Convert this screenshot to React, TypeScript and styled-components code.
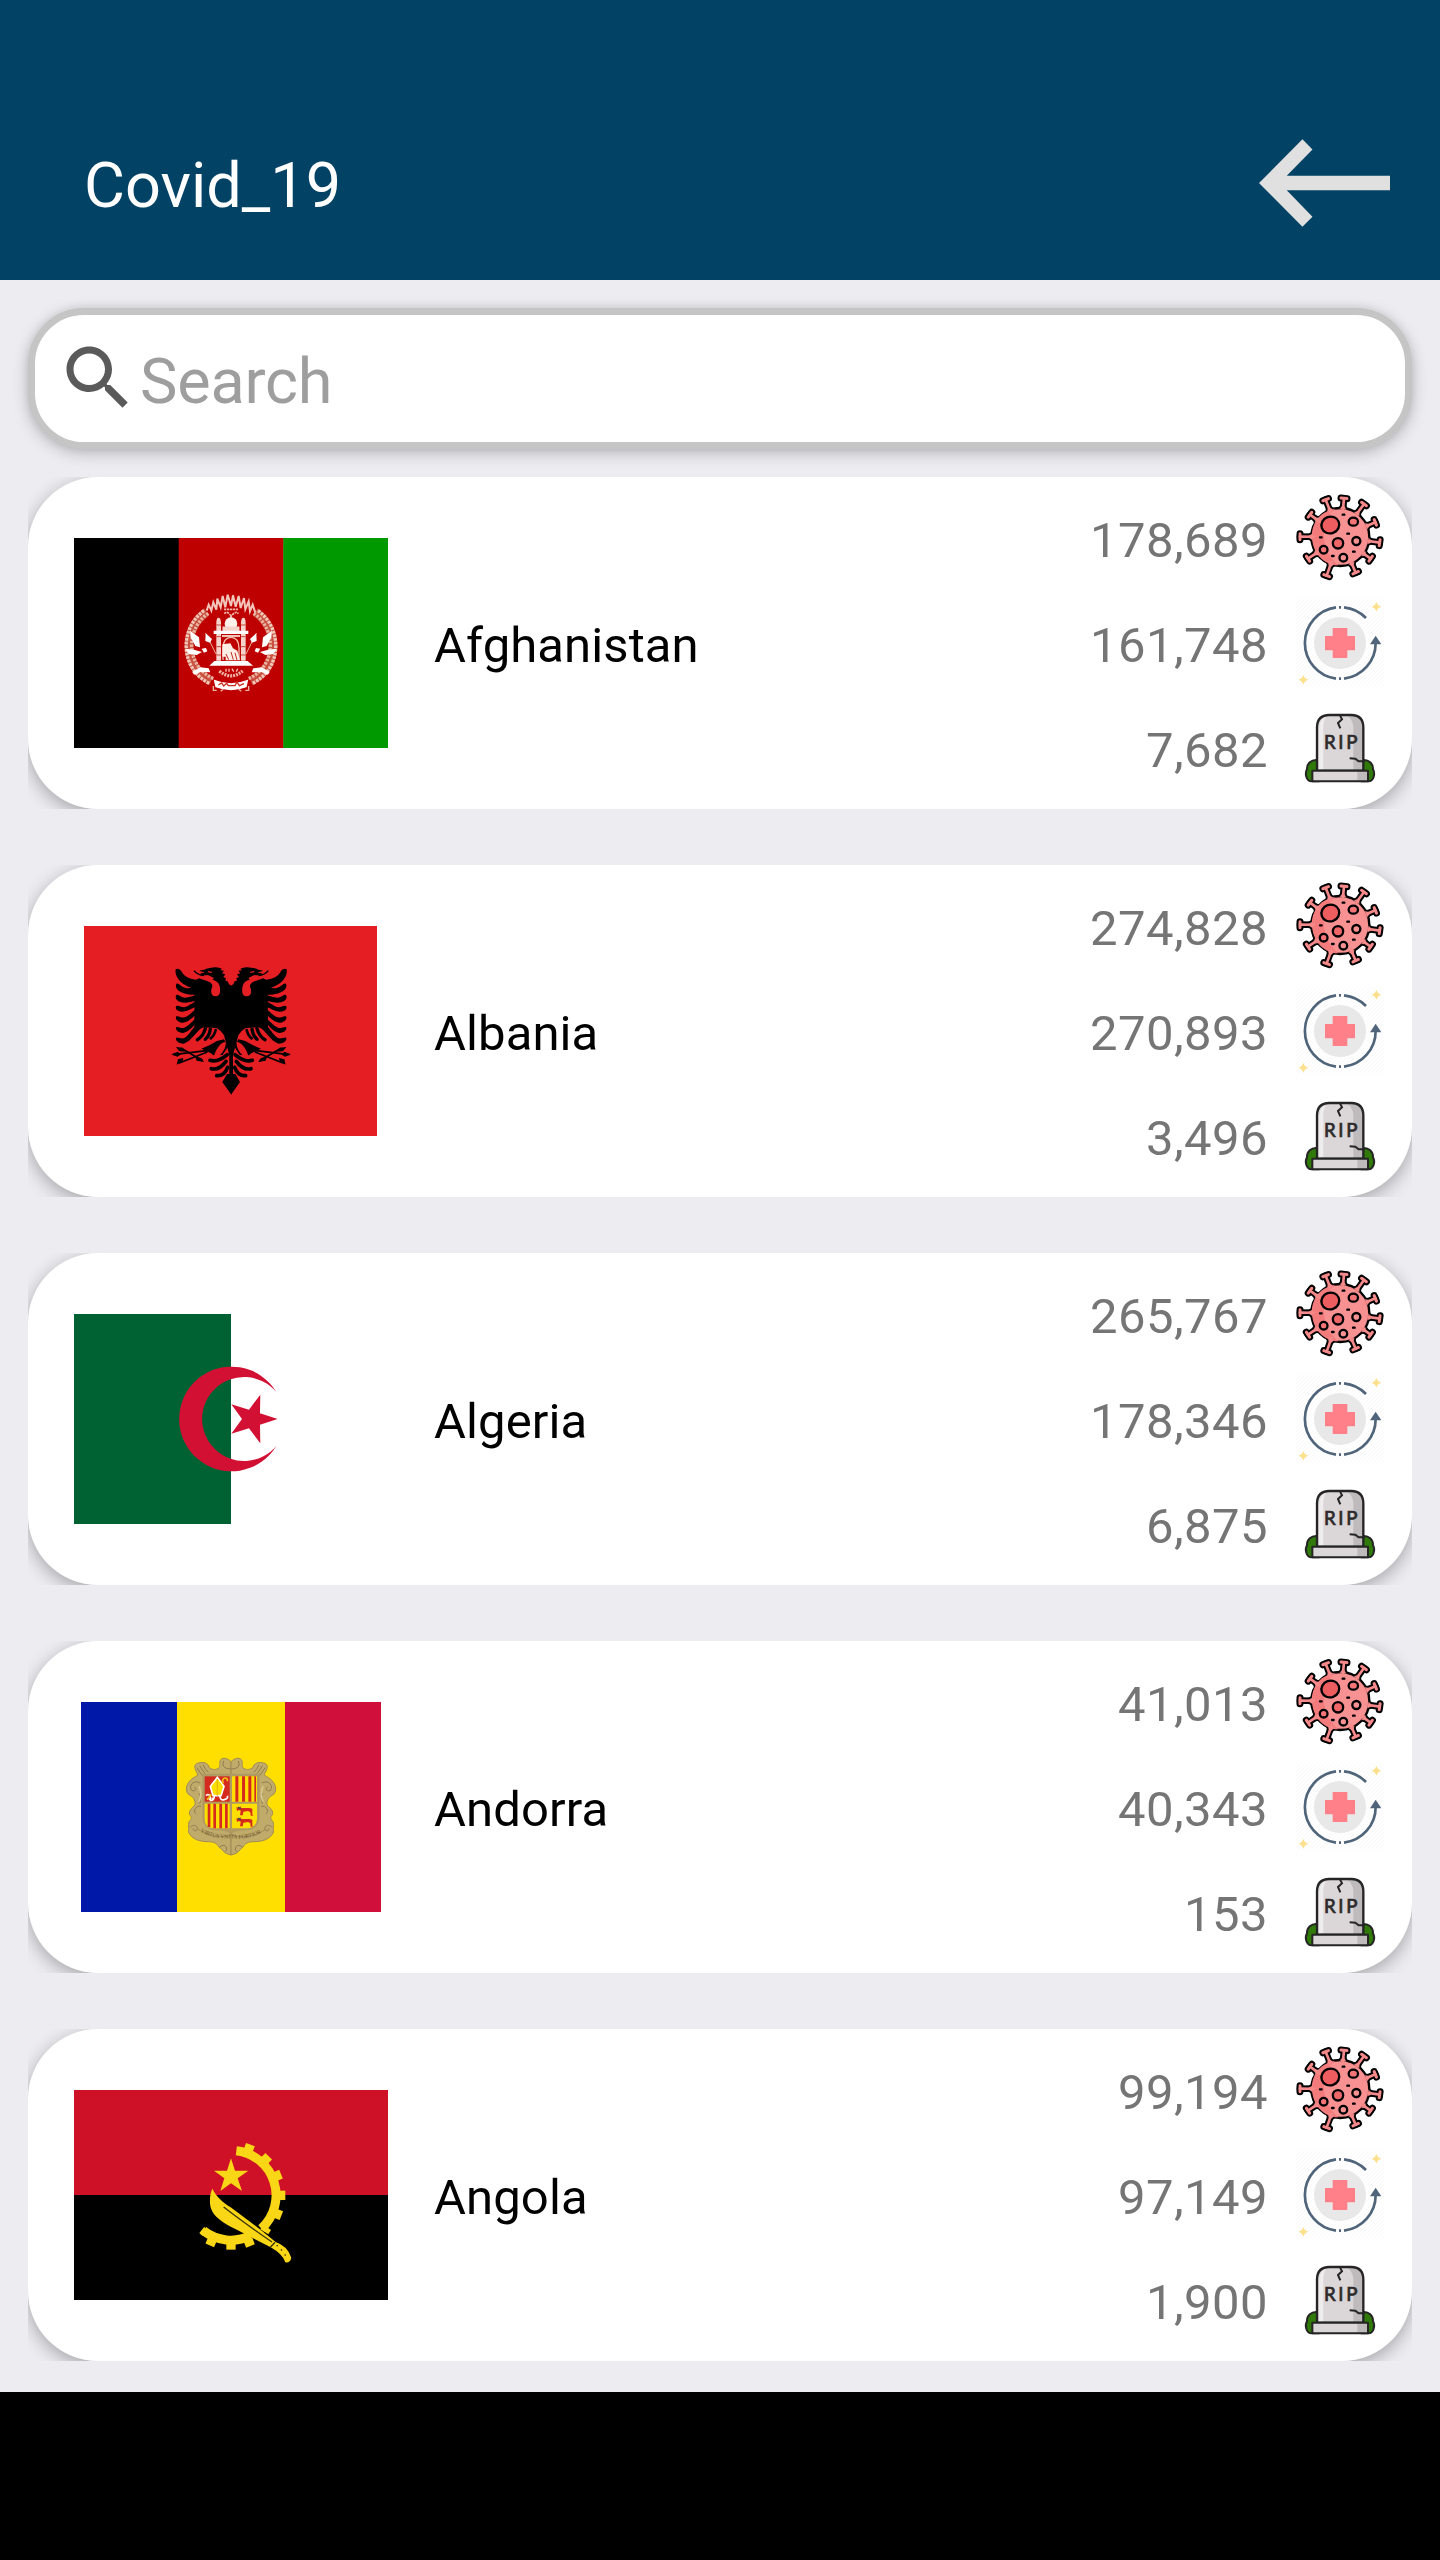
import React from "react";
import styled, { createGlobalStyle } from "styled-components";

const GlobalStyle = createGlobalStyle`
  * { box-sizing: border-box; }
  body { margin: 0; background: #edecf1; font-family: Roboto, "Liberation Sans", sans-serif; }
`;

const Screen = styled.div`
  width: 1440px;
  height: 2560px;
  display: flex;
  flex-direction: column;
  background: #edecf1;
  overflow: hidden;
`;

const Header = styled.header`
  height: 280px;
  flex: none;
  padding: 84px 50px 0 84px;
  display: flex;
  align-items: center;
  justify-content: space-between;
  background: #024265;
`;

const Title = styled.h1`
  margin: 0;
  padding-top: 8px;
  font-size: 63px;
  font-weight: 400;
  line-height: 74px;
  color: #fff;
`;

const BackButton = styled.button`
  display: flex;
  padding: 1px 0 0;
  border: 0;
  background: none;
`;

const Content = styled.main`
  flex: 1;
  padding: 28px 28px 0;
  display: flex;
  flex-direction: column;
  gap: 28px;
`;

const SearchBox = styled.label`
  height: 141px;
  flex: none;
  padding: 0 21px;
  display: flex;
  align-items: center;
  border: 7px solid #c5c5c5;
  border-radius: 56px;
  background: #fff;
  box-shadow: 0 4px 16px rgba(0, 0, 0, 0.22), 0 0 8px rgba(0, 0, 0, 0.08);
`;

const SearchIcon = styled.svg`
  width: 84px;
  height: 84px;
  flex: none;
  margin-bottom: 2px;
`;

const Placeholder = styled.span`
  padding-top: 6px;
  font-size: 63px;
  line-height: 74px;
  letter-spacing: -0.2px;
  color: #9e9e9e;
`;

const List = styled.ul`
  margin: 0;
  padding: 0;
  list-style: none;
  display: flex;
  flex-direction: column;
  gap: 56px;
`;

const Item = styled.li`
  height: 332px;
  overflow: hidden;
`;

const Card = styled.article`
  height: 100%;
  padding: 0 28px 0 46px;
  display: flex;
  align-items: center;
  border-radius: 70px;
  background: #fff;
  box-shadow: 0 5px 18px rgba(0, 0, 0, 0.3);
`;

const FlagSlot = styled.div`
  width: 314px;
  height: 210px;
  flex: none;
  display: flex;
  justify-content: center;
`;

const Name = styled.h2`
  flex: 1;
  margin: 0;
  padding: 5px 0 0 46px;
  font-size: 49px;
  font-weight: 400;
  line-height: 58px;
  letter-spacing: 0.1px;
  color: #000;
`;

const Stats = styled.div`
  display: flex;
  flex-direction: column;
`;

const Stat = styled.div`
  height: 105px;
  display: flex;
  align-items: center;
  justify-content: flex-end;
  gap: 28px;
`;

const Value = styled.span`
  padding-top: 6px;
  font-size: 49px;
  line-height: 58px;
  letter-spacing: 0.45px;
  color: #757575;
`;

const StatIcon = styled.svg`
  width: 88px;
  height: 88px;
  flex: none;
`;

const NavBar = styled.footer`
  height: 168px;
  flex: none;
  background: #000;
`;

const SPIKES = [
  [137, 61], [192, 57], [252, 74], [286, 129], [299, 190], [272, 238],
  [227, 280], [140, 289], [84, 238], [60, 172], [90, 106],
];

function VirusIcon() {
  const cx = 181;
  const cy = 173;
  const spikes = SPIKES.map(([x, y]) => {
    const d = Math.hypot(x - cx, y - cy);
    const ux = (x - cx) / d;
    const uy = (y - cy) / d;
    return {
      stem: `M${cx + ux * 80} ${cy + uy * 80}L${x} ${y}`,
      cap: `M${x - uy * 9} ${y + ux * 9}L${x + uy * 9} ${y - ux * 9}`,
      foot: `M${cx + ux * 84 - uy * 9} ${cy + uy * 84 + ux * 9}L${cx + ux * 98} ${cy + uy * 98}L${cx + ux * 84 + uy * 9} ${cy + uy * 84 - ux * 9}Z`,
    };
  });
  return (
    <StatIcon viewBox="48 44 264 264">
      <g stroke="#000" fill="#000" strokeLinecap="round" strokeLinejoin="round">
        {spikes.map((s, i) => (
          <g key={i}>
            <path d={s.stem} strokeWidth="20" />
            <path d={s.cap} strokeWidth="21" />
            <path d={s.foot} strokeWidth="12" />
          </g>
        ))}
      </g>
      <circle cx={cx} cy={cy} r="87" fill="#f89292" stroke="#000" strokeWidth="7" />
      <path d="M166 88C112 98 93 140 96 176C99 220 130 258 176 258C120 215 118 125 166 88Z" fill="#f47b7c" />
      <g stroke="#f68a8b" fill="#f68a8b" strokeLinecap="round">
        {spikes.map((s, i) => (
          <g key={i}>
            <path d={s.stem} strokeWidth="8" />
            <path d={s.cap} strokeWidth="9" />
            <path d={s.foot} strokeWidth="1" />
          </g>
        ))}
      </g>
      <g stroke="#000" strokeWidth="7">
        <ellipse cx="151" cy="137" rx="27" ry="25" fill="#ee5d60" transform="rotate(-20 151 137)" />
        <ellipse cx="220" cy="127" rx="14" ry="12" fill="#f47577" />
        <circle cx="174" cy="192" r="15.500" fill="#ee6668" />
        <circle cx="229" cy="185" r="12" fill="#f89292" />
        <circle cx="131" cy="211" r="11.500" fill="#f47577" />
        <circle cx="190" cy="235" r="11.500" fill="#f89292" />
      </g>
      <g stroke="#000" strokeWidth="7" strokeLinecap="round">
        <path d="M188 106h5M120 174h5M202 163h5M156 230h5M219 217h5" />
      </g>
    </StatIcon>
  );
}

function RecoveredIcon() {
  return (
    <StatIcon viewBox="48 357 264 264">
      <defs>
        <pattern id="hatch" width="12" height="12" patternUnits="userSpaceOnUse">
          <path d="M-3 15L15 -3" stroke="#f4f4f4" strokeWidth="1.6" />
        </pattern>
      </defs>
      <rect x="48" y="357" width="264" height="264" fill="url(#hatch)" />
      <circle cx="180" cy="489" r="78" fill="#e8e8e8" />
      <path d="M158 444h44v24h23v43h-23v23h-44v-23h-23v-43h23z" fill="#ff8089" />
      <g fill="none" stroke="#50657a" strokeWidth="8">
        <path d="M192 382A108 108 0 0 1 258 414" />
        <path d="M168 382A108 108 0 0 0 168 596" />
        <path d="M192 596A108 108 0 0 0 287 488" />
        <path d="M177 382h6M177 596h6" />
      </g>
      <path d="M287 467L304 493H270Z" fill="#50657a" />
      <g fill="#fde08d">
        <path d="M289 365Q292 377 304 380Q292 383 289 395Q286 383 274 380Q286 377 289 365Z" />
        <path d="M70 584Q73 596 85 599Q73 602 70 614Q67 602 55 599Q67 596 70 584Z" />
      </g>
    </StatIcon>
  );
}

function TombIcon() {
  return (
    <StatIcon viewBox="48 672 264 264">
      <g stroke="#252525" strokeWidth="6">
        <path d="M112 840C94 838 80 850 81 868C74 880 78 905 96 904H115Z" fill="#2f7a08" />
        <path d="M248 840C266 838 280 850 279 868C286 880 282 905 264 904H245Z" fill="#2f7a08" />
      </g>
      <path d="M111 872V742Q111 706 148 705H214Q250 706 250 742V872Z" fill="#dbd6d8" />
      <path d="M196 705H214Q250 706 250 742V872H220V742Q218 712 196 705Z" fill="#bfbbbc" />
      <path d="M117 872V745Q118 718 138 710Q130 722 130 745V872Z" fill="#eeecec" />
      <path d="M111 872V742Q111 706 148 705H214Q250 706 250 742V872Z" fill="none" stroke="#252525" strokeWidth="7" />
      <path d="M97 872H264V904H97Z" fill="#dbd6d8" />
      <path d="M232 872H264V904H232Z" fill="#bfbbbc" />
      <path d="M97 872H264V904H97Z" fill="none" stroke="#252525" strokeWidth="6" strokeLinejoin="round" />
      <path d="M180 706L186 718L174 729L181 745M209 835L226 836L236 844H254" fill="none" stroke="#252525" strokeWidth="6" />
      <text x="132" y="808" fontFamily="Lato, Roboto, sans-serif" fontSize="56" fontWeight="400" fill="#2d2a2b" stroke="#2d2a2b" strokeWidth="2.200" textLength="100">RIP</text>
    </StatIcon>
  );
}

function Afghanistan() {
  const half = (
    <g>
      <path d="M140 96C67 145 67 262 154 303" fill="none" stroke="#c9503f" strokeWidth="27" />
      <path d="M132 92C58 145 59 266 148 310" fill="none" stroke="#f0c9bb" strokeWidth="10" strokeDasharray="8 3" />
      <path d="M145 100C75 148 77 258 160 296" fill="none" stroke="#e9b6a5" strokeWidth="10" strokeDasharray="7 4" />
      <path d="M90 152L117 172L120 202L106 198L92 172Z" fill="#fff" />
      <path d="M76 206L102 209L126 216L110 225L86 222Z" fill="#fff" />
      <path d="M97 276L120 262L146 265L151 277L122 276L102 284Z" fill="#fff" />
      <path d="M137 160L168 222" stroke="#e8b09f" strokeWidth="3" />
      <path d="M137 160L156 177L150 188L136 183ZM125 206L138 204L142 214L132 218Z" fill="#fff" />
      <path d="M169 242V130Q169 113 175.500 113Q183 113 183 130V242Z" fill="#f5d5cb" />
      <path d="M169 135h14M169 170h14M169 200h14M169 225h14" stroke="#c64b3c" strokeWidth="3" />
    </g>
  );
  return (
    <svg width="314" height="210" viewBox="0 0 314 210">
      <path fill="#000" d="M0 0h105v210H0z" />
      <path fill="#bf0000" d="M104.700 0h105v210h-105z" />
      <path fill="#009a00" d="M209.300 0H314v210H209.300z" />
      <g transform="translate(86 42) scale(.3333)">
        {half}
        <g transform="translate(426 0) scale(-1 1)">{half}</g>
        <path d="M140 92l6-18 8 18 6-25 9 22 3-33 10 26 6-34 8 34 7-38 10 34 6-32 8 34 9-32 6 36 10-30 4 34 10-24 4 30 8-20 8 24" fill="none" stroke="#f3c6bb" strokeWidth="6" />
        <path d="M192 88h42M193 101q8-8 14 0t14 0t14 0" fill="none" stroke="#f0b8ab" strokeWidth="5" strokeDasharray="7 2" />
        <circle cx="213" cy="131" r="19" fill="#fff1e9" />
        <path d="M213 106v8M190 142h46v10h-46z" stroke="#f5d5cb" strokeWidth="5" fill="#f5d5cb" />
        <path d="M161 152h104v10h-104z" fill="#fff" />
        <path d="M186 165h54v6h-54z" fill="#f0c3b6" />
        <path d="M189 240V205Q190 172 213 172Q236 172 237 205V240" fill="none" stroke="#efc0b2" strokeWidth="4" />
        <path d="M187 193L211 190L219 205L232 212L240 241H197V230H187Z" fill="#ffeee6" />
        <path d="M198 222l8 17M213 216l7 23M225 218l6 22" stroke="#bf2b20" strokeWidth="3" />
        <path d="M163 243H263L279 257H148Z" fill="#fff" />
        <path d="M198 266v9M207 266v9M216 266l5 9M229 275l4-9" stroke="#f3c6bb" strokeWidth="4" />
        <path d="M178 273Q213 302 248 273" fill="none" stroke="#edb4a5" strokeWidth="10" strokeDasharray="6 3" />
        <path d="M164 302Q213 322 262 302L258 320Q213 337 168 320Z" fill="#fff" stroke="#fff" strokeWidth="4" />
        <path d="M175 315l10-6 6 9 9-8 5 7h20l6-11 7 11 14-6" fill="none" stroke="#cc3024" strokeWidth="4" />
        <path d="M160 318v13h10M266 318v13h-10M182 334l8-6M244 334l-8-6" fill="none" stroke="#edb4a5" strokeWidth="4" />
      </g>
    </svg>
  );
}

function Albania() {
  const half = (
    <g>
      <path d="M244 137L237 133L233 124L226 122L228 115L220 111L226 103L216 100L222 92L211 91L216 86Q198 80 184 83Q170 84 162 89Q151 90 148 93L164 97L153 103Q165 108 174 105L192 114Q186 122 180 126L147 115L134 122L133 262Q160 262 200 264Q212 270 222 286L238 345V410L244 420Z" />
      <path d="M132 92Q142 105 162 107M152 102L165 100" fill="none" stroke="#000" strokeWidth="4" />
      <path d="M77 88C82 85 90 86 96 97C106 114 125 118 145 120V148C108 145 72 118 77 88Z" />
      <path d="M79 131C86 127 93 141 108 144C118 146 130 142 142 140V163C108 168 70 152 79 131Z" />
      <path d="M79 165C87 161 92 173 105 173C117 173 130 166 142 165V182C122 184 108 191 94 187C82 184 73 175 79 165Z" />
      <path d="M79 198C86 195 93 203 103 202C116 200 126 187 142 184V199C123 206 114 214 98 215C83 216 73 205 79 198Z" />
      <path d="M79 229C87 227 94 235 104 232C118 229 126 212 143 207V220C127 232 117 246 99 248C83 248 74 235 79 229Z" />
      <path d="M79 261C87 260 94 267 103 263C118 257 128 240 145 230V244C130 256 119 276 99 279C84 279 74 267 79 261Z" />
      <path d="M79 293C87 292 94 298 103 294C119 286 127 262 146 250L160 262C140 270 126 304 101 311C85 311 74 299 79 293Z" />
      <g fill="none" stroke="#000" strokeWidth="10" strokeLinecap="round">
        <path d="M142 299Q159 290 166 266M166 298Q178 288 181 268" />
        <path d="M182 295Q193 287 197 270" strokeWidth="8" />
      </g>
      <path d="M154 326L178 316L201 303L222 298L234 320L218 345L190 346L183 340Z" />
      <path d="M176 331L70 344M94 325L158 362M86 370L172 336" stroke="#000" strokeWidth="5" />
      <path d="M64 343L84 335L92 344L82 350ZM78 321L98 323L106 335L88 334ZM80 374L84 358L100 354L98 364ZM162 366L140 362L136 350L154 354Z" />
      <g fill="none" stroke="#000" strokeWidth="11" strokeLinecap="round">
        <path d="M180 361Q204 368 232 344M184 386Q207 392 228 364" />
        <path d="M200 407Q223 409 233 382" />
      </g>
      <path d="M244 464L217 426L231 402H244Z" />
      <path d="M226 305C232 318 216 347 193 357C187 348 205 309 226 305Z" fill="#e41e23" />
      <path d="M154 115C174 121 189 130 187 140C181 151 182 168 196 169C212 170 212 151 209 138C203 117 180 118 154 115Z" fill="#e41e23" />
      <path d="M174 95L186 97" stroke="#e41e23" strokeWidth="4" />
    </g>
  );
  return (
    <svg width="294" height="210" viewBox="0 0 294 210">
      <path fill="#e41e23" d="M0 0h293v210H0z" />
      <g transform="translate(66 14) scale(.3333)">
        {half}
        <g transform="translate(487 0) scale(-1 1)">{half}</g>
      </g>
    </svg>
  );
}

function Algeria() {
  return (
    <svg width="314" height="210" viewBox="0 0 314 210">
      <path fill="#fff" d="M0 0h314v210H0z" />
      <path fill="#006233" d="M0 0h157v210H0z" />
      <g transform="translate(-14 -24) scale(.3333)" fill="#d21034">
        <path d="M649 306A157 157 0 1 0 649 468A126 126 0 1 1 649 306Z" />
        <path d="M653 387L600 370L601 314L567 359L514 343L546 387L514 431L567 415L601 460L600 404Z" />
      </g>
    </svg>
  );
}

function Andorra() {
  const half = (
    <g>
      <path d="M184 66C175 56 160 52 153 60C146 70 155 80 146 86C134 93 128 88 118 84C118 70 98 64 80 72C70 80 78 92 84 104C82 112 74 110 66 118C48 134 46 152 56 164C70 172 78 180 76 196C66 206 56 212 60 226C68 232 66 236 58 246C54 258 60 268 56 276C66 300 92 306 116 306C132 306 144 312 148 322C160 330 158 340 184 346Z" fill="#c1ab6b" stroke="#a08b55" strokeWidth="3" />
      <g fill="none" stroke="#8f7b4d" strokeWidth="3">
        <path d="M90 78Q98 92 106 102M100 75Q106 90 116 98M82 84Q92 100 98 108" />
        <path d="M92 130C70 118 56 140 66 152C76 158 84 146 74 142M94 200C78 196 70 214 78 222M62 262C76 250 88 262 80 272C74 276 68 270 72 266" />
        <path d="M162 64Q156 78 166 84Q174 88 184 88M150 322Q162 312 170 322Q174 332 166 336M88 160Q98 176 90 192" />
      </g>
      <path d="M88 140Q98 164 88 186" fill="none" stroke="#d9c88e" strokeWidth="5" />
    </g>
  );
  return (
    <svg width="300" height="210" viewBox="0 0 300 210">
      <path fill="#0018a8" d="M0 0h96v210H0z" />
      <path fill="#fedf00" d="M96 0h108v210H96z" />
      <path fill="#d0103a" d="M204 0h96v210h-96z" />
      <g transform="translate(88.700 37.700) scale(.3333)">
        {half}
        <g transform="translate(368 0) scale(-1 1)">{half}</g>
        <path d="M98 102H270V236Q266 270 230 272Q196 272 184 284Q172 272 138 272Q102 270 98 236Z" fill="#b09a63" />
        <path d="M105 110h75v76h-75z" fill="#d52b1e" />
        <path d="M187 110h75v76h-75zM105 192h75v74h-48Q106 264 105 240zM187 192h75v46q-2 26-28 28h-47z" fill="#fedf00" />
        <path d="M197 110h9v76h-9zM217 110h9v76h-9zM236 110h9v76h-9zM254 110h5v76h-5zM114 192h8v70h-8zM131 192h8v74h-8zM149 192h8v74h-8zM166 192h8v74h-8z" fill="#d52b1e" />
        <path d="M143 113L122 140L130 168H154L163 140Z" fill="#fedf00" stroke="#fff" strokeWidth="5" />
        <path d="M143 118V168" stroke="#e6bd00" strokeWidth="4" />
        <path d="M109 168q8-8 12 2t-4 8M128 174q2 10-8 8M134 168q0 14-12 14M150 168q2 16 14 12q12-2 9-12" fill="none" stroke="#fff" strokeWidth="5" />
        <path d="M160 132Q156 116 166 115Q176 116 172 124M125 164L112 180" fill="none" stroke="#f3c015" strokeWidth="5" />
        {[200, 233].map((y) => (
          <path key={y} transform={`translate(0 ${y})`} d="M200 2l7 3 8-6-2 6h26l9 2v18l3 3h-8l-1-10-7-4-14 2-2 11h-8l2-14-6-2-5 3Z" fill="#d52b1e" />
        ))}
        <path d="M205 203l8 4M205 236l8 4" stroke="#444a55" strokeWidth="5" />
        <path id="motto" d="M92 275Q132 301 184 295Q236 303 282 275" fill="none" />
        <path d="M84 268Q132 301 184 287Q236 303 290 268" fill="none" stroke="#a08b55" strokeWidth="3" />
        <text fontFamily="Liberation Serif, serif" fontSize="17" fill="#6b5327">
          <textPath href="#motto" textLength="190">VIRTUS VNITA FORTIOR</textPath>
        </text>
      </g>
    </svg>
  );
}

function Angola() {
  const teeth = [-69, -46, -23, 0, 22, 69, 90, 113];
  return (
    <svg width="314" height="210" viewBox="0 0 314 210">
      <path fill="#ce1126" d="M0 0h314v105H0z" />
      <path fill="#000" d="M0 105h314v105H0z" />
      <g transform="translate(106 30) scale(.3333)" fill="#f9d616">
        <g transform="translate(153 226)">
          <path d="M16 -134A135 135 0 0 1 91 100" fill="none" stroke="#f9d616" strokeWidth="27" />
          <path d="M59 121A135 135 0 0 1 -83 106" fill="none" stroke="#f9d616" strokeWidth="27" />
          {teeth.map((a) => (
            <rect key={a} x="142" y="-14" width="21" height="28" transform={`rotate(${a})`} />
          ))}
          <path d="M97 87L120 104L112 117L88 102ZM-73 108L-80 94L-95 113L-86 121Z" />
        </g>
        <path d="M153 115L165 152H205L173 175L186 213L153 190L121 213L133 175L102 152H141Z" />
        <path d="M97 206C110 232 128 246 152 262L236 325L287 366Q323 378 334 413Q331 429 316 427Q309 403 272 382L200 345C160 322 92 300 90 250C89 230 92 217 97 206Z" />
        <path d="M131 261Q190 307 276 366M285 367L271 382" fill="none" stroke="#3a3308" strokeWidth="4" />
        <path d="M291 377h1M304 390h1M315 405h1" stroke="#3a3308" strokeWidth="4" strokeLinecap="round" />
      </g>
    </svg>
  );
}

const countries = [
  { name: "Afghanistan", Flag: Afghanistan, cases: "178,689", recovered: "161,748", deaths: "7,682" },
  { name: "Albania", Flag: Albania, cases: "274,828", recovered: "270,893", deaths: "3,496" },
  { name: "Algeria", Flag: Algeria, cases: "265,767", recovered: "178,346", deaths: "6,875" },
  { name: "Andorra", Flag: Andorra, cases: "41,013", recovered: "40,343", deaths: "153" },
  { name: "Angola", Flag: Angola, cases: "99,194", recovered: "97,149", deaths: "1,900" },
];

export default function App() {
  return (
    <Screen>
      <GlobalStyle />
      <Header>
        <Title>Covid_19</Title>
        <BackButton>
          <svg width="131" height="88" viewBox="598 116 392 262">
            <path d="M598 247L728 116L758 147L681 225H990V269H681L758 348L728 378Z" fill="#e0e0e0" />
          </svg>
        </BackButton>
      </Header>
      <Content>
        <SearchBox>
          <SearchIcon viewBox="0 0 24 24">
            <path
              fill="#5a5a5a"
              d="M15.500 14h-.79l-.28-.27C15.410 12.590 16 11.110 16 9.500 16 5.910 13.090 3 9.500 3S3 5.910 3 9.500 5.910 16 9.500 16c1.610 0 3.090-.59 4.230-1.570l.27.28v.79l5 4.990L20.490 19l-4.990-5zm-6 0C7.010 14 5 11.990 5 9.500S7.010 5 9.500 5 14 7.010 14 9.500 11.990 14 9.500 14z"
            />
          </SearchIcon>
          <Placeholder>Search</Placeholder>
        </SearchBox>
        <List>
          {countries.map(({ name, Flag, cases, recovered, deaths }) => (
            <Item key={name}>
              <Card>
                <FlagSlot>
                  <Flag />
                </FlagSlot>
                <Name>{name}</Name>
                <Stats>
                  <Stat>
                    <Value>{cases}</Value>
                    <VirusIcon />
                  </Stat>
                  <Stat>
                    <Value>{recovered}</Value>
                    <RecoveredIcon />
                  </Stat>
                  <Stat>
                    <Value>{deaths}</Value>
                    <TombIcon />
                  </Stat>
                </Stats>
              </Card>
            </Item>
          ))}
        </List>
      </Content>
      <NavBar />
    </Screen>
  );
}
